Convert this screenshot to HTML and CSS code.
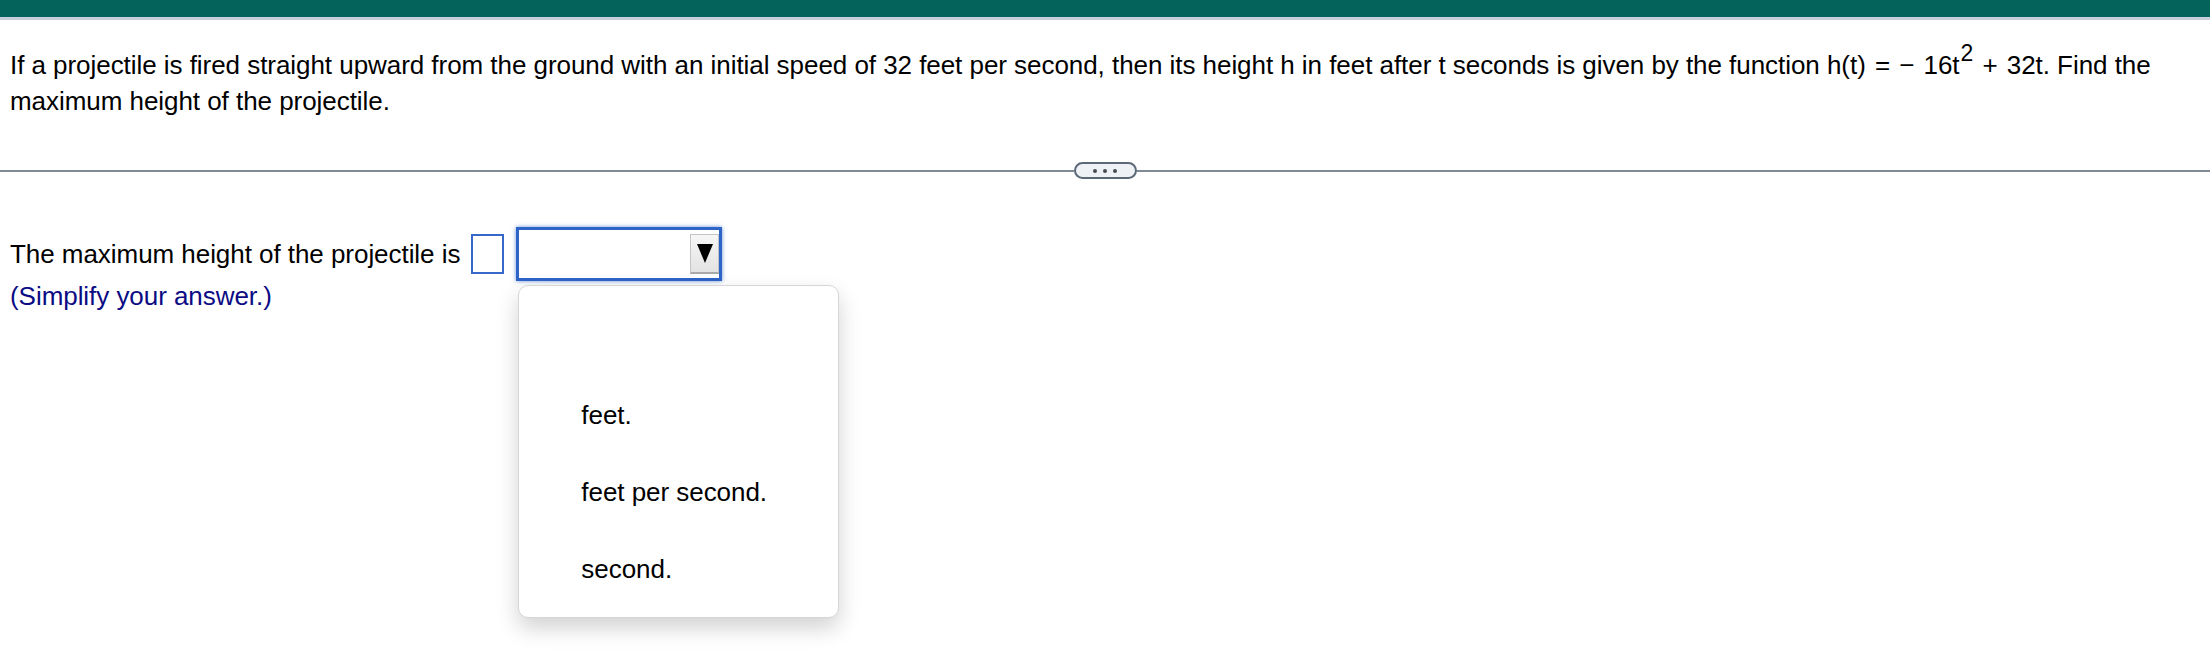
FILE: index.html
```html
<!DOCTYPE html>
<html>
    <head>
        <title>Question</title>
        <link rel="stylesheet" href="styles.css">
    </head>
    <body>
        <div class="topBar"></div>
        <div class="question">
            If a projectile is fired straight upward from the ground with an initial speed of 32 feet per second, then its height h in feet after t seconds is given by the function <span class="math">h(t) = &minus; 16t<sup class="sup">2</sup> + 32t</span>. Find the maximum height of the projectile.
        </div>
        <div class="divider">
            <div class="rule"></div>
            <div class="pill">
                <span class="dot"></span>
                <span class="dot"></span>
                <span class="dot"></span>
            </div>
            <div class="rule"></div>
        </div>
        <div class="answerRow">
            <span class="answerText">The maximum height of the projectile is</span>
            <span class="answerBox"></span>
            <div class="selectWrap">
                <div class="selectBox">
                    <div class="arrowButton">
                        <svg width="16" height="19" viewBox="0 0 16 19">
                            <polygon points="0,0 16,0 8,19" fill="#000"/>
                        </svg>
                    </div>
                </div>
                <div class="menu">
                    <div class="option"></div>
                    <div class="option">feet.</div>
                    <div class="option">feet per second.</div>
                    <div class="option">second.</div>
                </div>
            </div>
        </div>
        <div class="hint">(Simplify your answer.)</div>
    </body>
</html>
```

FILE: styles.css
```css
html, body {
    margin: 0;
    min-height: 661px;
    background-color: white;
}

body {
    font-family: "Liberation Sans", Arial, sans-serif;
    color: black;
    letter-spacing: -0.05px;
}

.topBar {
    height: 17px;
    background-color: #04635a;
    border-bottom: 3px solid #c8cfdb;
}

.question {
    margin-top: 27px;
    padding: 0 10px;
    font-size: 26px;
    line-height: 36px;
}

.math {
    word-spacing: 2px;
}

.sup {
    font-size: 23px;
    line-height: 0;
    vertical-align: 13px;
    margin-left: 1px;
}

.divider {
    display: flex;
    align-items: center;
    margin-top: 43px;
    height: 17px;
}

.rule {
    flex: 1;
    height: 2px;
    background-color: #7f8a96;
}

.pill {
    display: flex;
    align-items: center;
    justify-content: center;
    gap: 6px;
    width: 59px;
    height: 13px;
    border: 2px solid #5b6877;
    border-radius: 10px;
    background-color: #eef2f5;
}

.dot {
    width: 4px;
    height: 4px;
    border-radius: 50%;
    background-color: #474c53;
}

.answerRow {
    display: flex;
    align-items: center;
    margin-top: 48px;
    padding-left: 10px;
    height: 54px;
    font-size: 26px;
    line-height: 36px;
}

.answerBox {
    width: 29px;
    height: 36px;
    margin-left: 11px;
    border: 2px solid #3568c9;
}

.selectWrap {
    position: relative;
    margin-left: 12px;
}

.selectBox {
    display: flex;
    align-items: center;
    justify-content: flex-end;
    width: 200px;
    height: 48px;
    border: 3px solid #2e64c8;
    box-shadow: 0 0 4px rgba(46, 100, 200, 0.7);
    background-color: white;
}

.arrowButton {
    display: flex;
    align-items: center;
    justify-content: center;
    width: 27px;
    height: 37px;
    margin-bottom: 1px;
    border: 1px solid #c4c4c4;
    border-bottom: 2px solid #a9a9a9;
    background: linear-gradient(#f6f6f6, #e3e3e3);
}

.menu {
    position: absolute;
    left: 2px;
    top: 58px;
    width: 319px;
    height: 308px;
    padding: 14px 0 9px 0;
    border: 1px solid #d6d6d6;
    border-radius: 10px;
    background-color: white;
    box-shadow: 0 10px 22px rgba(0, 0, 0, 0.18);
    z-index: 2;
}

.option {
    height: 77px;
    line-height: 77px;
    padding-left: 62px;
    font-size: 26px;
}

.hint {
    margin-top: -3px;
    padding-left: 10px;
    font-size: 26px;
    line-height: 36px;
    color: #0b0b84;
}
```
